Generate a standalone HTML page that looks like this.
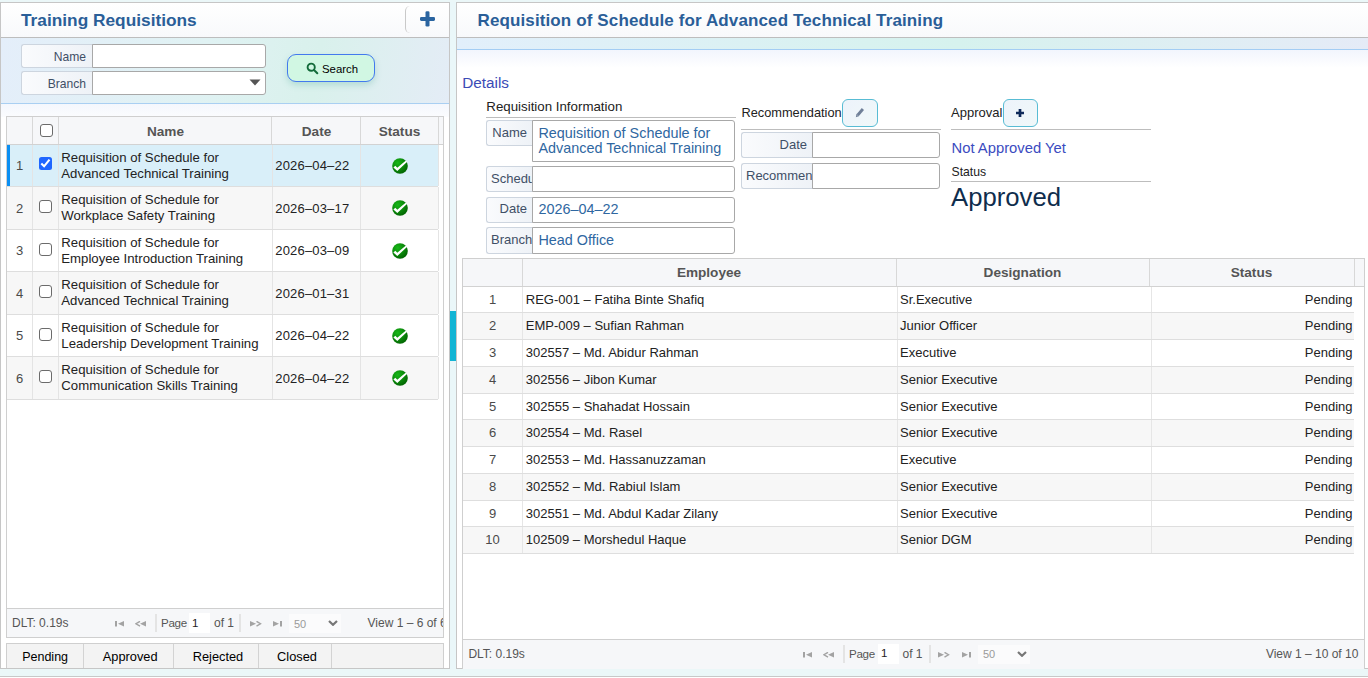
<!DOCTYPE html>
<html><head><meta charset="utf-8"><style>
*{box-sizing:border-box;margin:0;padding:0}
html,body{width:1368px;height:678px;overflow:hidden}
body{background:#ebf7f8;font-family:"Liberation Sans",sans-serif;position:relative;color:#222}
div,span{position:absolute;white-space:nowrap}
.t{line-height:1}
</style></head><body>
<div style="left:0px;top:676px;width:1368px;height:2px;background:#fff;border-top:1px solid #c8c8c8"></div>
<div style="left:0px;top:2px;width:450px;height:667px;background:#fff;border:1px solid #c6c6c6"></div>
<div style="left:1px;top:3px;width:448px;height:34px;background:linear-gradient(#fff,#f8f9fb)"></div>
<div style="left:1px;top:37px;width:448px;height:1px;background:#bdbdbd"></div>
<div class="t" style="left:21px;top:12.36px;font-size:17.3px;color:#2a5e98;font-weight:bold;letter-spacing:0px;">Training Requisitions</div>
<div style="left:405px;top:6px;width:20px;height:27px;border-left:1px solid #c9c9c9;border-radius:5px 0 0 5px"></div>
<svg style="position:absolute;left:420px;top:11px" width="15" height="16" viewBox="0 0 15 16"><rect x="5.5" y="0.3" width="4" height="15.2" rx="1.3" fill="#2a64a0"/><rect x="0" y="5.9" width="15" height="4" rx="1.3" fill="#2a64a0"/></svg>
<div style="left:1px;top:38px;width:448px;height:65px;background:linear-gradient(100deg,#e4eefa 0%,#e0f2f3 45%,#d9f1ec 70%,#e4ecf6 100%)"></div>
<div style="left:1px;top:103px;width:448px;height:1px;background:#a9cff2"></div>
<div style="left:1px;top:104px;width:448px;height:13px;background:linear-gradient(#f4f7fd,#fbfcfe)"></div>
<div style="left:21px;top:44px;width:72px;height:24px;background:linear-gradient(90deg,#fafbfd,#eef2f7);border:1px solid #cdd5df;border-right:none;border-radius:3px 0 0 3px;overflow:hidden"></div>
<div class="t" style="left:-214.00px;width:300px;text-align:right;top:50.96px;font-size:12.1px;color:#3f4f66;font-weight:normal;letter-spacing:0px">Name</div>
<div style="left:92px;top:44px;width:174px;height:24px;background:#fff;border:1px solid #a8a8a8;border-radius:0 3px 3px 0"></div>
<div style="left:21px;top:71px;width:72px;height:24px;background:linear-gradient(90deg,#fafbfd,#eef2f7);border:1px solid #cdd5df;border-right:none;border-radius:3px 0 0 3px;overflow:hidden"></div>
<div class="t" style="left:-214.00px;width:300px;text-align:right;top:77.96px;font-size:12.1px;color:#3f4f66;font-weight:normal;letter-spacing:0px">Branch</div>
<div style="left:92px;top:71px;width:174px;height:24px;background:#fff;border:1px solid #a8a8a8;border-radius:0 3px 3px 0"></div>
<svg style="position:absolute;left:249px;top:79px" width="12" height="7" viewBox="0 0 12 7"><path d="M0.5 0.5h11l-5.5 6z" fill="#555"/></svg>
<div style="left:287px;top:54px;width:88px;height:28px;background:#d1f7e3;border:1.3px solid #4379ee;border-radius:9px;box-shadow:0 3px 6px rgba(60,160,140,.25)"></div>
<svg style="position:absolute;left:306px;top:62px" width="13" height="13" viewBox="0 0 13 13"><circle cx="5.2" cy="5.2" r="3.6" fill="none" stroke="#136b3a" stroke-width="1.9"/><path d="M8 8l3.3 3.3" stroke="#136b3a" stroke-width="2" stroke-linecap="round"/></svg>
<div class="t" style="left:322px;top:64.15px;font-size:11.4px;color:#000;font-weight:normal;letter-spacing:0px;">Search</div>
<div style="left:6px;top:116px;width:438px;height:522px;background:#fff;border:1px solid #cfcfcf"></div>
<div style="left:7px;top:117px;width:436px;height:27px;background:#f6f7f9"></div>
<div style="left:7px;top:144px;width:436px;height:1px;background:#d2d2d2"></div>
<div style="left:32px;top:117px;width:1px;height:27px;background:#d8d8d8"></div>
<div style="left:58px;top:117px;width:1px;height:27px;background:#d8d8d8"></div>
<div style="left:271px;top:117px;width:1px;height:27px;background:#d8d8d8"></div>
<div style="left:360px;top:117px;width:1px;height:27px;background:#d8d8d8"></div>
<div style="left:438px;top:117px;width:1px;height:27px;background:#d8d8d8"></div>
<div class="t" style="left:-80.50px;width:200px;text-align:center;top:125.30px;font-size:13px;color:#222;font-weight:normal;letter-spacing:0px"></div>
<div style="left:40px;top:124px;width:13px;height:13px;border:1.3px solid #6b6b6b;border-radius:3px;background:#fff"></div>
<div class="t" style="left:65.50px;width:200px;text-align:center;top:124.79px;font-size:13.6px;color:#555;font-weight:bold;letter-spacing:0px">Name</div>
<div class="t" style="left:216.50px;width:200px;text-align:center;top:124.79px;font-size:13.6px;color:#555;font-weight:bold;letter-spacing:0px">Date</div>
<div class="t" style="left:299.50px;width:200px;text-align:center;top:124.79px;font-size:13.6px;color:#555;font-weight:bold;letter-spacing:0px">Status</div>
<div style="left:7px;top:145px;width:431px;height:41px;background:#d9eff9"></div>
<div style="left:7px;top:186px;width:431px;height:1px;background:#dedede"></div>
<div style="left:32px;top:145px;width:1px;height:41px;background:#e4e4e4"></div>
<div style="left:58px;top:145px;width:1px;height:41px;background:#e4e4e4"></div>
<div style="left:272px;top:145px;width:1px;height:41px;background:#e4e4e4"></div>
<div style="left:360px;top:145px;width:1px;height:41px;background:#e4e4e4"></div>
<div style="left:438px;top:145px;width:1px;height:41px;background:#e4e4e4"></div>
<div style="left:7px;top:145px;width:3px;height:41px;background:#0b8ff2"></div>
<div class="t" style="left:-80.50px;width:200px;text-align:center;top:159.10px;font-size:13px;color:#4a4a4a;font-weight:normal;letter-spacing:0px">1</div>
<div style="left:39px;top:157.0px;width:13px;height:13px;border-radius:2.5px;background:#1f66ff"></div>
<svg style="position:absolute;left:39px;top:157.0px" width="13" height="13" viewBox="0 0 13 13"><path d="M2.3 6.6L5.1 9.3 10.5 2.7" fill="none" stroke="#fff" stroke-width="2.1"/></svg>
<div class="t" style="left:61.3px;top:150.83px;font-size:13.2px;color:#222;font-weight:normal;letter-spacing:0px;">Requisition of Schedule for</div>
<div class="t" style="left:61.3px;top:166.93px;font-size:13.2px;color:#222;font-weight:normal;letter-spacing:0px;">Advanced Technical Training</div>
<div class="t" style="left:275.3px;top:159.10px;font-size:13px;color:#222;font-weight:normal;letter-spacing:0.17px;">2026–04–22</div>
<svg style="position:absolute;left:392px;top:157.5px" width="16" height="16" viewBox="0 0 16 16" style="overflow:visible"><defs><radialGradient id="g0" cx="0.35" cy="0.3" r="0.8"><stop offset="0" stop-color="#18b818"/><stop offset="1" stop-color="#005e00"/></radialGradient></defs><circle cx="8" cy="8" r="7.8" fill="url(#g0)"/><path d="M1.4 9.6L3.3 7.7 5.3 9.7 13.9 2.4 15.2 3.8 5.3 12.9z" fill="#fff"/></svg>
<div style="left:7px;top:187px;width:431px;height:42px;background:#f7f7f7"></div>
<div style="left:7px;top:229px;width:431px;height:1px;background:#dedede"></div>
<div style="left:32px;top:187px;width:1px;height:42px;background:#e4e4e4"></div>
<div style="left:58px;top:187px;width:1px;height:42px;background:#e4e4e4"></div>
<div style="left:272px;top:187px;width:1px;height:42px;background:#e4e4e4"></div>
<div style="left:360px;top:187px;width:1px;height:42px;background:#e4e4e4"></div>
<div style="left:438px;top:187px;width:1px;height:42px;background:#e4e4e4"></div>
<div class="t" style="left:-80.50px;width:200px;text-align:center;top:201.60px;font-size:13px;color:#4a4a4a;font-weight:normal;letter-spacing:0px">2</div>
<div style="left:39px;top:200.0px;width:13px;height:13px;border:1.3px solid #6b6b6b;border-radius:3px;background:#fff"></div>
<div class="t" style="left:61.3px;top:193.33px;font-size:13.2px;color:#222;font-weight:normal;letter-spacing:0px;">Requisition of Schedule for</div>
<div class="t" style="left:61.3px;top:209.43px;font-size:13.2px;color:#222;font-weight:normal;letter-spacing:0px;">Workplace Safety Training</div>
<div class="t" style="left:275.3px;top:201.60px;font-size:13px;color:#222;font-weight:normal;letter-spacing:0.17px;">2026–03–17</div>
<svg style="position:absolute;left:392px;top:200.0px" width="16" height="16" viewBox="0 0 16 16" style="overflow:visible"><defs><radialGradient id="g1" cx="0.35" cy="0.3" r="0.8"><stop offset="0" stop-color="#18b818"/><stop offset="1" stop-color="#005e00"/></radialGradient></defs><circle cx="8" cy="8" r="7.8" fill="url(#g1)"/><path d="M1.4 9.6L3.3 7.7 5.3 9.7 13.9 2.4 15.2 3.8 5.3 12.9z" fill="#fff"/></svg>
<div style="left:7px;top:230px;width:431px;height:41px;background:#fff"></div>
<div style="left:7px;top:271px;width:431px;height:1px;background:#dedede"></div>
<div style="left:32px;top:230px;width:1px;height:41px;background:#e4e4e4"></div>
<div style="left:58px;top:230px;width:1px;height:41px;background:#e4e4e4"></div>
<div style="left:272px;top:230px;width:1px;height:41px;background:#e4e4e4"></div>
<div style="left:360px;top:230px;width:1px;height:41px;background:#e4e4e4"></div>
<div style="left:438px;top:230px;width:1px;height:41px;background:#e4e4e4"></div>
<div class="t" style="left:-80.50px;width:200px;text-align:center;top:244.10px;font-size:13px;color:#4a4a4a;font-weight:normal;letter-spacing:0px">3</div>
<div style="left:39px;top:242.5px;width:13px;height:13px;border:1.3px solid #6b6b6b;border-radius:3px;background:#fff"></div>
<div class="t" style="left:61.3px;top:235.83px;font-size:13.2px;color:#222;font-weight:normal;letter-spacing:0px;">Requisition of Schedule for</div>
<div class="t" style="left:61.3px;top:251.93px;font-size:13.2px;color:#222;font-weight:normal;letter-spacing:0px;">Employee Introduction Training</div>
<div class="t" style="left:275.3px;top:244.10px;font-size:13px;color:#222;font-weight:normal;letter-spacing:0.17px;">2026–03–09</div>
<svg style="position:absolute;left:392px;top:242.5px" width="16" height="16" viewBox="0 0 16 16" style="overflow:visible"><defs><radialGradient id="g2" cx="0.35" cy="0.3" r="0.8"><stop offset="0" stop-color="#18b818"/><stop offset="1" stop-color="#005e00"/></radialGradient></defs><circle cx="8" cy="8" r="7.8" fill="url(#g2)"/><path d="M1.4 9.6L3.3 7.7 5.3 9.7 13.9 2.4 15.2 3.8 5.3 12.9z" fill="#fff"/></svg>
<div style="left:7px;top:272px;width:431px;height:42px;background:#f7f7f7"></div>
<div style="left:7px;top:314px;width:431px;height:1px;background:#dedede"></div>
<div style="left:32px;top:272px;width:1px;height:42px;background:#e4e4e4"></div>
<div style="left:58px;top:272px;width:1px;height:42px;background:#e4e4e4"></div>
<div style="left:272px;top:272px;width:1px;height:42px;background:#e4e4e4"></div>
<div style="left:360px;top:272px;width:1px;height:42px;background:#e4e4e4"></div>
<div style="left:438px;top:272px;width:1px;height:42px;background:#e4e4e4"></div>
<div class="t" style="left:-80.50px;width:200px;text-align:center;top:286.60px;font-size:13px;color:#4a4a4a;font-weight:normal;letter-spacing:0px">4</div>
<div style="left:39px;top:285.0px;width:13px;height:13px;border:1.3px solid #6b6b6b;border-radius:3px;background:#fff"></div>
<div class="t" style="left:61.3px;top:278.33px;font-size:13.2px;color:#222;font-weight:normal;letter-spacing:0px;">Requisition of Schedule for</div>
<div class="t" style="left:61.3px;top:294.43px;font-size:13.2px;color:#222;font-weight:normal;letter-spacing:0px;">Advanced Technical Training</div>
<div class="t" style="left:275.3px;top:286.60px;font-size:13px;color:#222;font-weight:normal;letter-spacing:0.17px;">2026–01–31</div>
<div style="left:7px;top:315px;width:431px;height:41px;background:#fff"></div>
<div style="left:7px;top:356px;width:431px;height:1px;background:#dedede"></div>
<div style="left:32px;top:315px;width:1px;height:41px;background:#e4e4e4"></div>
<div style="left:58px;top:315px;width:1px;height:41px;background:#e4e4e4"></div>
<div style="left:272px;top:315px;width:1px;height:41px;background:#e4e4e4"></div>
<div style="left:360px;top:315px;width:1px;height:41px;background:#e4e4e4"></div>
<div style="left:438px;top:315px;width:1px;height:41px;background:#e4e4e4"></div>
<div class="t" style="left:-80.50px;width:200px;text-align:center;top:329.10px;font-size:13px;color:#4a4a4a;font-weight:normal;letter-spacing:0px">5</div>
<div style="left:39px;top:327.5px;width:13px;height:13px;border:1.3px solid #6b6b6b;border-radius:3px;background:#fff"></div>
<div class="t" style="left:61.3px;top:320.83px;font-size:13.2px;color:#222;font-weight:normal;letter-spacing:0px;">Requisition of Schedule for</div>
<div class="t" style="left:61.3px;top:336.93px;font-size:13.2px;color:#222;font-weight:normal;letter-spacing:0px;">Leadership Development Training</div>
<div class="t" style="left:275.3px;top:329.10px;font-size:13px;color:#222;font-weight:normal;letter-spacing:0.17px;">2026–04–22</div>
<svg style="position:absolute;left:392px;top:327.5px" width="16" height="16" viewBox="0 0 16 16" style="overflow:visible"><defs><radialGradient id="g4" cx="0.35" cy="0.3" r="0.8"><stop offset="0" stop-color="#18b818"/><stop offset="1" stop-color="#005e00"/></radialGradient></defs><circle cx="8" cy="8" r="7.8" fill="url(#g4)"/><path d="M1.4 9.6L3.3 7.7 5.3 9.7 13.9 2.4 15.2 3.8 5.3 12.9z" fill="#fff"/></svg>
<div style="left:7px;top:357px;width:431px;height:42px;background:#f7f7f7"></div>
<div style="left:7px;top:399px;width:431px;height:1px;background:#dedede"></div>
<div style="left:32px;top:357px;width:1px;height:42px;background:#e4e4e4"></div>
<div style="left:58px;top:357px;width:1px;height:42px;background:#e4e4e4"></div>
<div style="left:272px;top:357px;width:1px;height:42px;background:#e4e4e4"></div>
<div style="left:360px;top:357px;width:1px;height:42px;background:#e4e4e4"></div>
<div style="left:438px;top:357px;width:1px;height:42px;background:#e4e4e4"></div>
<div class="t" style="left:-80.50px;width:200px;text-align:center;top:371.60px;font-size:13px;color:#4a4a4a;font-weight:normal;letter-spacing:0px">6</div>
<div style="left:39px;top:370.0px;width:13px;height:13px;border:1.3px solid #6b6b6b;border-radius:3px;background:#fff"></div>
<div class="t" style="left:61.3px;top:363.33px;font-size:13.2px;color:#222;font-weight:normal;letter-spacing:0px;">Requisition of Schedule for</div>
<div class="t" style="left:61.3px;top:379.43px;font-size:13.2px;color:#222;font-weight:normal;letter-spacing:0px;">Communication Skills Training</div>
<div class="t" style="left:275.3px;top:371.60px;font-size:13px;color:#222;font-weight:normal;letter-spacing:0.17px;">2026–04–22</div>
<svg style="position:absolute;left:392px;top:370.0px" width="16" height="16" viewBox="0 0 16 16" style="overflow:visible"><defs><radialGradient id="g5" cx="0.35" cy="0.3" r="0.8"><stop offset="0" stop-color="#18b818"/><stop offset="1" stop-color="#005e00"/></radialGradient></defs><circle cx="8" cy="8" r="7.8" fill="url(#g5)"/><path d="M1.4 9.6L3.3 7.7 5.3 9.7 13.9 2.4 15.2 3.8 5.3 12.9z" fill="#fff"/></svg>
<div style="left:7px;top:608px;width:436px;height:29px;background:#f6f7f9;border-top:1px solid #cfcfcf"></div>
<div class="t" style="left:12px;top:617.14px;font-size:12px;color:#555;font-weight:normal;letter-spacing:0px;">DLT: 0.19s</div>
<svg style="position:absolute;left:115px;top:621.0px" width="10" height="6" viewBox="0 0 10 6"><rect x="0" y="0" width="2" height="5.5" fill="#a3a3a3"/><path d="M3 2.75L9 0v5.5z" fill="#a3a3a3"/></svg>
<svg style="position:absolute;left:135px;top:621.0px" width="12" height="6" viewBox="0 0 12 6"><path d="M5 0.3L1 2.75 5 5.2" fill="none" stroke="#a3a3a3" stroke-width="1.4"/><path d="M5 2.75L11 0v5.5z" fill="#a3a3a3"/></svg>
<div style="left:155px;top:614px;width:2px;height:18px;background:#e4e4e4"></div>
<div class="t" style="left:161px;top:617.48px;font-size:11.6px;color:#555;font-weight:normal;letter-spacing:-0.3px;">Page</div>
<div style="left:189px;top:613px;width:21px;height:20px;background:#fff"></div>
<div class="t" style="left:192px;top:617.57px;font-size:11.5px;color:#222;font-weight:normal;letter-spacing:0px;">1</div>
<div class="t" style="left:214px;top:617.14px;font-size:12px;color:#555;font-weight:normal;letter-spacing:0px;">of 1</div>
<div style="left:239px;top:614px;width:2px;height:18px;background:#e4e4e4"></div>
<svg style="position:absolute;left:250px;top:621.0px" width="12" height="6" viewBox="0 0 12 6"><path d="M0 0v5.5L6 2.75z" fill="#a3a3a3"/><path d="M6.5 0.3l4 2.45-4 2.45" fill="none" stroke="#a3a3a3" stroke-width="1.4"/></svg>
<svg style="position:absolute;left:273px;top:621.0px" width="10" height="6" viewBox="0 0 10 6"><path d="M0 0v5.5L6 2.75z" fill="#a3a3a3"/><rect x="7" y="0" width="2" height="5.5" fill="#a3a3a3"/></svg>
<div style="left:289px;top:614px;width:52px;height:19px;background:#fbfbfc"></div>
<div class="t" style="left:294px;top:618.59px;font-size:11px;color:#9a9a9a;font-weight:normal;letter-spacing:0px;">50</div>
<svg style="position:absolute;left:328px;top:620.0px" width="10" height="6" viewBox="0 0 10 6"><path d="M1 1l4 3.8 4-3.8" fill="none" stroke="#777" stroke-width="2.2"/></svg>
<div style="left:7px;top:609px;width:436px;height:28px;overflow:hidden"><div class="t" style="left:360.5px;top:8.14px;font-size:12px;color:#555">View 1 – 6 of 6</div></div>
<div style="left:6px;top:643px;width:438px;height:25px;background:#f3f3f3;border:1px solid #cfcfcf;border-bottom:none"></div>
<div style="left:83px;top:644px;width:1px;height:24px;background:#d3d3d3"></div>
<div style="left:173px;top:644px;width:1px;height:24px;background:#d3d3d3"></div>
<div style="left:258px;top:644px;width:1px;height:24px;background:#d3d3d3"></div>
<div style="left:331px;top:644px;width:1px;height:24px;background:#d3d3d3"></div>
<div class="t" style="left:-54.90px;width:200px;text-align:center;top:651.42px;font-size:12.5px;color:#000;font-weight:normal;letter-spacing:0px">Pending</div>
<div class="t" style="left:30.20px;width:200px;text-align:center;top:651.16px;font-size:12.8px;color:#000;font-weight:normal;letter-spacing:0px">Approved</div>
<div class="t" style="left:118.00px;width:200px;text-align:center;top:651.16px;font-size:12.8px;color:#000;font-weight:normal;letter-spacing:0px">Rejected</div>
<div class="t" style="left:197.00px;width:200px;text-align:center;top:651.16px;font-size:12.8px;color:#000;font-weight:normal;letter-spacing:0px">Closed</div>
<div style="left:450px;top:2px;width:6px;height:667px;background:#eaf7f9"></div>
<div style="left:450px;top:311px;width:6px;height:50px;background:#12b4d4"></div>
<div style="left:456px;top:2px;width:920px;height:667px;background:#fff;border:1px solid #c6c6c6"></div>
<div style="left:457px;top:3px;width:911px;height:34px;background:linear-gradient(#fff,#f8f9fb)"></div>
<div style="left:457px;top:37px;width:911px;height:1px;background:#bdbdbd"></div>
<div class="t" style="left:477.5px;top:11.61px;font-size:17px;color:#2a5e98;font-weight:bold;letter-spacing:0.12px;">Requisition of Schedule for Advanced Technical Training</div>
<div style="left:457px;top:38px;width:911px;height:11px;background:linear-gradient(90deg,#e2effb 0%,#d8f2f0 45%,#d6f2ee 55%,#e5ebf7 100%)"></div>
<div style="left:457px;top:49px;width:911px;height:1px;background:#a3cdf4"></div>
<div style="left:457px;top:50px;width:911px;height:18px;background:linear-gradient(#f2f5fd,#fff)"></div>
<div class="t" style="left:462.2px;top:74.75px;font-size:15.3px;color:#3b4bb6;font-weight:normal;letter-spacing:0px;">Details</div>
<div class="t" style="left:486.3px;top:99.74px;font-size:13.3px;color:#222;font-weight:normal;letter-spacing:0px;">Requisition Information</div>
<div style="left:486px;top:117px;width:250px;height:1px;background:#bdbdbd"></div>
<div style="left:486px;top:120px;width:47px;height:26px;background:linear-gradient(90deg,#fafbfd,#eef2f7);border:1px solid #cdd5df;border-right:none;border-radius:3px 0 0 3px;overflow:hidden"></div>
<div class="t" style="left:227.00px;width:300px;text-align:right;top:125.80px;font-size:13px;color:#3f4f66;font-weight:normal;letter-spacing:0px">Name</div>
<div style="left:532px;top:120px;width:203px;height:42px;background:#fff;border:1px solid #a8a8a8;border-radius:0 3px 3px 0"></div>
<div class="t" style="left:538.4px;top:126.11px;font-size:14.4px;color:#2f67a1;font-weight:normal;letter-spacing:0px;">Requisition of Schedule for</div>
<div class="t" style="left:538.4px;top:140.81px;font-size:14.4px;color:#2f67a1;font-weight:normal;letter-spacing:0px;">Advanced Technical Training</div>
<div style="left:486px;top:166px;width:47px;height:26px;background:linear-gradient(90deg,#fafbfd,#eef2f7);border:1px solid #cdd5df;border-right:none;border-radius:3px 0 0 3px;overflow:hidden"></div>
<div style="left:486px;top:166px;width:47px;height:26px;overflow:hidden"><div class="t" style="left:5px;top:5.70px;font-size:13px;color:#3f4f66">Schedule</div></div>
<div style="left:532px;top:166px;width:203px;height:26px;background:#fff;border:1px solid #a8a8a8;border-radius:0 3px 3px 0"></div>
<div style="left:486px;top:197px;width:47px;height:26px;background:linear-gradient(90deg,#fafbfd,#eef2f7);border:1px solid #cdd5df;border-right:none;border-radius:3px 0 0 3px;overflow:hidden"></div>
<div class="t" style="left:227.00px;width:300px;text-align:right;top:202.00px;font-size:13px;color:#3f4f66;font-weight:normal;letter-spacing:0px">Date</div>
<div style="left:532px;top:197px;width:203px;height:26px;background:#fff;border:1px solid #a8a8a8;border-radius:0 3px 3px 0"></div>
<div class="t" style="left:538.4px;top:202.11px;font-size:14.4px;color:#2f67a1;font-weight:normal;letter-spacing:0px;">2026–04–22</div>
<div style="left:486px;top:227px;width:47px;height:27px;background:linear-gradient(90deg,#fafbfd,#eef2f7);border:1px solid #cdd5df;border-right:none;border-radius:3px 0 0 3px;overflow:hidden"></div>
<div style="left:486px;top:227px;width:47px;height:27px;overflow:hidden"><div class="t" style="left:5px;top:5.50px;font-size:13px;color:#3f4f66">Branch</div></div>
<div style="left:532px;top:227px;width:203px;height:27px;background:#fff;border:1px solid #a8a8a8;border-radius:0 3px 3px 0"></div>
<div class="t" style="left:538.4px;top:232.51px;font-size:14.4px;color:#2f67a1;font-weight:normal;letter-spacing:0px;">Head Office</div>
<div class="t" style="left:741.4px;top:107.06px;font-size:12.8px;color:#222;font-weight:normal;letter-spacing:0px;">Recommendation</div>
<div style="left:842px;top:99px;width:36px;height:28px;background:linear-gradient(135deg,#edf3fb,#f0f8f9);border:1px solid #58bcd4;border-radius:6px"></div>
<svg style="position:absolute;left:855px;top:107px" width="10" height="11" viewBox="0 0 10 11"><path d="M0.8 10.2l0.7-2.9 5.3-6.2 2.2 1.9-5.3 6.2z" fill="#6f7f98"/><path d="M1.5 7.3l2.2 1.9" stroke="#a9b4c4" stroke-width="0.7"/></svg>
<div style="left:741px;top:129px;width:200px;height:1px;background:#bdbdbd"></div>
<div style="left:741px;top:132px;width:72px;height:26px;background:linear-gradient(90deg,#fafbfd,#eef2f7);border:1px solid #cdd5df;border-right:none;border-radius:3px 0 0 3px;overflow:hidden"></div>
<div class="t" style="left:507.00px;width:300px;text-align:right;top:137.80px;font-size:13px;color:#3f4f66;font-weight:normal;letter-spacing:0px">Date</div>
<div style="left:812px;top:132px;width:128px;height:26px;background:#fff;border:1px solid #a8a8a8;border-radius:0 3px 3px 0"></div>
<div style="left:741px;top:163px;width:72px;height:26px;background:linear-gradient(90deg,#fafbfd,#eef2f7);border:1px solid #cdd5df;border-right:none;border-radius:3px 0 0 3px;overflow:hidden"></div>
<div style="left:741px;top:163px;width:72px;height:26px;overflow:hidden"><div class="t" style="left:5px;top:5.80px;font-size:13px;color:#3f4f66">Recommendation</div></div>
<div style="left:812px;top:163px;width:128px;height:26px;background:#fff;border:1px solid #a8a8a8;border-radius:0 3px 3px 0"></div>
<div class="t" style="left:951.1px;top:106.00px;font-size:13px;color:#222;font-weight:normal;letter-spacing:0px;">Approval</div>
<div style="left:1003px;top:99px;width:35px;height:28px;background:linear-gradient(135deg,#edf3fb,#f0f8f9);border:1px solid #58bcd4;border-radius:6px"></div>
<svg style="position:absolute;left:1016px;top:109px" width="8" height="8" viewBox="0 0 8 8"><path d="M4 0v8M0 4h8" stroke="#0f2a5a" stroke-width="2.7"/></svg>
<div style="left:951px;top:129px;width:200px;height:1px;background:#bdbdbd"></div>
<div class="t" style="left:951.5px;top:140.97px;font-size:14.8px;color:#3b4bc0;font-weight:normal;letter-spacing:0px;">Not Approved Yet</div>
<div class="t" style="left:951.5px;top:165.57px;font-size:12.2px;color:#222;font-weight:normal;letter-spacing:0px;">Status</div>
<div style="left:951px;top:181px;width:200px;height:1px;background:#bdbdbd"></div>
<div class="t" style="left:951px;top:185.24px;font-size:25.7px;color:#0f2d4d;font-weight:normal;letter-spacing:0px;">Approved</div>
<div style="left:462px;top:258px;width:903px;height:411px;background:#fff;border:1px solid #cfcfcf;border-bottom:none"></div>
<div style="left:463px;top:259px;width:901px;height:27px;background:#f6f7f9"></div>
<div style="left:463px;top:286px;width:901px;height:1px;background:#d2d2d2"></div>
<div style="left:522px;top:259px;width:1px;height:27px;background:#d8d8d8"></div>
<div style="left:896px;top:259px;width:1px;height:27px;background:#d8d8d8"></div>
<div style="left:1149px;top:259px;width:1px;height:27px;background:#d8d8d8"></div>
<div style="left:1354px;top:259px;width:1px;height:27px;background:#d8d8d8"></div>
<div class="t" style="left:609.00px;width:200px;text-align:center;top:265.69px;font-size:13.6px;color:#555;font-weight:bold;letter-spacing:0px">Employee</div>
<div class="t" style="left:922.50px;width:200px;text-align:center;top:265.69px;font-size:13.6px;color:#555;font-weight:bold;letter-spacing:0px">Designation</div>
<div class="t" style="left:1151.50px;width:200px;text-align:center;top:265.69px;font-size:13.6px;color:#555;font-weight:bold;letter-spacing:0px">Status</div>
<div style="left:463px;top:287px;width:891px;height:25px;background:#fff"></div>
<div style="left:463px;top:312px;width:891px;height:1px;background:#dedede"></div>
<div style="left:522px;top:287px;width:1px;height:25px;background:#e6e6e6"></div>
<div style="left:897px;top:287px;width:1px;height:25px;background:#e6e6e6"></div>
<div style="left:1151px;top:287px;width:1px;height:25px;background:#e6e6e6"></div>
<div class="t" style="left:392.50px;width:200px;text-align:center;top:292.90px;font-size:13px;color:#4a4a4a;font-weight:normal;letter-spacing:0px">1</div>
<div class="t" style="left:525.8px;top:292.90px;font-size:13px;color:#222;font-weight:normal;letter-spacing:0px;">REG-001 – Fatiha Binte Shafiq</div>
<div class="t" style="left:900px;top:292.90px;font-size:13px;color:#222;font-weight:normal;letter-spacing:0px;">Sr.Executive</div>
<div class="t" style="left:1052.50px;width:300px;text-align:right;top:292.90px;font-size:13px;color:#222;font-weight:normal;letter-spacing:0px">Pending</div>
<div style="left:463px;top:313px;width:891px;height:26px;background:#f7f7f7"></div>
<div style="left:463px;top:339px;width:891px;height:1px;background:#dedede"></div>
<div style="left:522px;top:313px;width:1px;height:26px;background:#e6e6e6"></div>
<div style="left:897px;top:313px;width:1px;height:26px;background:#e6e6e6"></div>
<div style="left:1151px;top:313px;width:1px;height:26px;background:#e6e6e6"></div>
<div class="t" style="left:392.50px;width:200px;text-align:center;top:318.90px;font-size:13px;color:#4a4a4a;font-weight:normal;letter-spacing:0px">2</div>
<div class="t" style="left:525.8px;top:318.90px;font-size:13px;color:#222;font-weight:normal;letter-spacing:0px;">EMP-009 – Sufian Rahman</div>
<div class="t" style="left:900px;top:318.90px;font-size:13px;color:#222;font-weight:normal;letter-spacing:0px;">Junior Officer</div>
<div class="t" style="left:1052.50px;width:300px;text-align:right;top:318.90px;font-size:13px;color:#222;font-weight:normal;letter-spacing:0px">Pending</div>
<div style="left:463px;top:340px;width:891px;height:26px;background:#fff"></div>
<div style="left:463px;top:366px;width:891px;height:1px;background:#dedede"></div>
<div style="left:522px;top:340px;width:1px;height:26px;background:#e6e6e6"></div>
<div style="left:897px;top:340px;width:1px;height:26px;background:#e6e6e6"></div>
<div style="left:1151px;top:340px;width:1px;height:26px;background:#e6e6e6"></div>
<div class="t" style="left:392.50px;width:200px;text-align:center;top:345.90px;font-size:13px;color:#4a4a4a;font-weight:normal;letter-spacing:0px">3</div>
<div class="t" style="left:525.8px;top:345.90px;font-size:13px;color:#222;font-weight:normal;letter-spacing:0px;">302557 – Md. Abidur Rahman</div>
<div class="t" style="left:900px;top:345.90px;font-size:13px;color:#222;font-weight:normal;letter-spacing:0px;">Executive</div>
<div class="t" style="left:1052.50px;width:300px;text-align:right;top:345.90px;font-size:13px;color:#222;font-weight:normal;letter-spacing:0px">Pending</div>
<div style="left:463px;top:367px;width:891px;height:26px;background:#f7f7f7"></div>
<div style="left:463px;top:393px;width:891px;height:1px;background:#dedede"></div>
<div style="left:522px;top:367px;width:1px;height:26px;background:#e6e6e6"></div>
<div style="left:897px;top:367px;width:1px;height:26px;background:#e6e6e6"></div>
<div style="left:1151px;top:367px;width:1px;height:26px;background:#e6e6e6"></div>
<div class="t" style="left:392.50px;width:200px;text-align:center;top:372.90px;font-size:13px;color:#4a4a4a;font-weight:normal;letter-spacing:0px">4</div>
<div class="t" style="left:525.8px;top:372.90px;font-size:13px;color:#222;font-weight:normal;letter-spacing:0px;">302556 – Jibon Kumar</div>
<div class="t" style="left:900px;top:372.90px;font-size:13px;color:#222;font-weight:normal;letter-spacing:0px;">Senior Executive</div>
<div class="t" style="left:1052.50px;width:300px;text-align:right;top:372.90px;font-size:13px;color:#222;font-weight:normal;letter-spacing:0px">Pending</div>
<div style="left:463px;top:394px;width:891px;height:25px;background:#fff"></div>
<div style="left:463px;top:419px;width:891px;height:1px;background:#dedede"></div>
<div style="left:522px;top:394px;width:1px;height:25px;background:#e6e6e6"></div>
<div style="left:897px;top:394px;width:1px;height:25px;background:#e6e6e6"></div>
<div style="left:1151px;top:394px;width:1px;height:25px;background:#e6e6e6"></div>
<div class="t" style="left:392.50px;width:200px;text-align:center;top:399.90px;font-size:13px;color:#4a4a4a;font-weight:normal;letter-spacing:0px">5</div>
<div class="t" style="left:525.8px;top:399.90px;font-size:13px;color:#222;font-weight:normal;letter-spacing:0px;">302555 – Shahadat Hossain</div>
<div class="t" style="left:900px;top:399.90px;font-size:13px;color:#222;font-weight:normal;letter-spacing:0px;">Senior Executive</div>
<div class="t" style="left:1052.50px;width:300px;text-align:right;top:399.90px;font-size:13px;color:#222;font-weight:normal;letter-spacing:0px">Pending</div>
<div style="left:463px;top:420px;width:891px;height:26px;background:#f7f7f7"></div>
<div style="left:463px;top:446px;width:891px;height:1px;background:#dedede"></div>
<div style="left:522px;top:420px;width:1px;height:26px;background:#e6e6e6"></div>
<div style="left:897px;top:420px;width:1px;height:26px;background:#e6e6e6"></div>
<div style="left:1151px;top:420px;width:1px;height:26px;background:#e6e6e6"></div>
<div class="t" style="left:392.50px;width:200px;text-align:center;top:425.90px;font-size:13px;color:#4a4a4a;font-weight:normal;letter-spacing:0px">6</div>
<div class="t" style="left:525.8px;top:425.90px;font-size:13px;color:#222;font-weight:normal;letter-spacing:0px;">302554 – Md. Rasel</div>
<div class="t" style="left:900px;top:425.90px;font-size:13px;color:#222;font-weight:normal;letter-spacing:0px;">Senior Executive</div>
<div class="t" style="left:1052.50px;width:300px;text-align:right;top:425.90px;font-size:13px;color:#222;font-weight:normal;letter-spacing:0px">Pending</div>
<div style="left:463px;top:447px;width:891px;height:26px;background:#fff"></div>
<div style="left:463px;top:473px;width:891px;height:1px;background:#dedede"></div>
<div style="left:522px;top:447px;width:1px;height:26px;background:#e6e6e6"></div>
<div style="left:897px;top:447px;width:1px;height:26px;background:#e6e6e6"></div>
<div style="left:1151px;top:447px;width:1px;height:26px;background:#e6e6e6"></div>
<div class="t" style="left:392.50px;width:200px;text-align:center;top:452.90px;font-size:13px;color:#4a4a4a;font-weight:normal;letter-spacing:0px">7</div>
<div class="t" style="left:525.8px;top:452.90px;font-size:13px;color:#222;font-weight:normal;letter-spacing:0px;">302553 – Md. Hassanuzzaman</div>
<div class="t" style="left:900px;top:452.90px;font-size:13px;color:#222;font-weight:normal;letter-spacing:0px;">Executive</div>
<div class="t" style="left:1052.50px;width:300px;text-align:right;top:452.90px;font-size:13px;color:#222;font-weight:normal;letter-spacing:0px">Pending</div>
<div style="left:463px;top:474px;width:891px;height:26px;background:#f7f7f7"></div>
<div style="left:463px;top:500px;width:891px;height:1px;background:#dedede"></div>
<div style="left:522px;top:474px;width:1px;height:26px;background:#e6e6e6"></div>
<div style="left:897px;top:474px;width:1px;height:26px;background:#e6e6e6"></div>
<div style="left:1151px;top:474px;width:1px;height:26px;background:#e6e6e6"></div>
<div class="t" style="left:392.50px;width:200px;text-align:center;top:479.90px;font-size:13px;color:#4a4a4a;font-weight:normal;letter-spacing:0px">8</div>
<div class="t" style="left:525.8px;top:479.90px;font-size:13px;color:#222;font-weight:normal;letter-spacing:0px;">302552 – Md. Rabiul Islam</div>
<div class="t" style="left:900px;top:479.90px;font-size:13px;color:#222;font-weight:normal;letter-spacing:0px;">Senior Executive</div>
<div class="t" style="left:1052.50px;width:300px;text-align:right;top:479.90px;font-size:13px;color:#222;font-weight:normal;letter-spacing:0px">Pending</div>
<div style="left:463px;top:501px;width:891px;height:25px;background:#fff"></div>
<div style="left:463px;top:526px;width:891px;height:1px;background:#dedede"></div>
<div style="left:522px;top:501px;width:1px;height:25px;background:#e6e6e6"></div>
<div style="left:897px;top:501px;width:1px;height:25px;background:#e6e6e6"></div>
<div style="left:1151px;top:501px;width:1px;height:25px;background:#e6e6e6"></div>
<div class="t" style="left:392.50px;width:200px;text-align:center;top:506.90px;font-size:13px;color:#4a4a4a;font-weight:normal;letter-spacing:0px">9</div>
<div class="t" style="left:525.8px;top:506.90px;font-size:13px;color:#222;font-weight:normal;letter-spacing:0px;">302551 – Md. Abdul Kadar Zilany</div>
<div class="t" style="left:900px;top:506.90px;font-size:13px;color:#222;font-weight:normal;letter-spacing:0px;">Senior Executive</div>
<div class="t" style="left:1052.50px;width:300px;text-align:right;top:506.90px;font-size:13px;color:#222;font-weight:normal;letter-spacing:0px">Pending</div>
<div style="left:463px;top:527px;width:891px;height:26px;background:#f7f7f7"></div>
<div style="left:463px;top:553px;width:891px;height:1px;background:#dedede"></div>
<div style="left:522px;top:527px;width:1px;height:26px;background:#e6e6e6"></div>
<div style="left:897px;top:527px;width:1px;height:26px;background:#e6e6e6"></div>
<div style="left:1151px;top:527px;width:1px;height:26px;background:#e6e6e6"></div>
<div class="t" style="left:392.50px;width:200px;text-align:center;top:532.90px;font-size:13px;color:#4a4a4a;font-weight:normal;letter-spacing:0px">10</div>
<div class="t" style="left:525.8px;top:532.90px;font-size:13px;color:#222;font-weight:normal;letter-spacing:0px;">102509 – Morshedul Haque</div>
<div class="t" style="left:900px;top:532.90px;font-size:13px;color:#222;font-weight:normal;letter-spacing:0px;">Senior DGM</div>
<div class="t" style="left:1052.50px;width:300px;text-align:right;top:532.90px;font-size:13px;color:#222;font-weight:normal;letter-spacing:0px">Pending</div>
<div style="left:463px;top:639px;width:901px;height:30px;background:#f6f7f9;border-top:1px solid #cfcfcf"></div>
<div class="t" style="left:468.4px;top:648.04px;font-size:12px;color:#555;font-weight:normal;letter-spacing:0px;">DLT: 0.19s</div>
<svg style="position:absolute;left:803px;top:651.9000000000001px" width="10" height="6" viewBox="0 0 10 6"><rect x="0" y="0" width="2" height="5.5" fill="#a3a3a3"/><path d="M3 2.75L9 0v5.5z" fill="#a3a3a3"/></svg>
<svg style="position:absolute;left:823px;top:651.9000000000001px" width="12" height="6" viewBox="0 0 12 6"><path d="M5 0.3L1 2.75 5 5.2" fill="none" stroke="#a3a3a3" stroke-width="1.4"/><path d="M5 2.75L11 0v5.5z" fill="#a3a3a3"/></svg>
<div style="left:843px;top:645px;width:2px;height:18px;background:#e4e4e4"></div>
<div class="t" style="left:849px;top:648.38px;font-size:11.6px;color:#555;font-weight:normal;letter-spacing:-0.3px;">Page</div>
<div style="left:878px;top:644px;width:21px;height:20px;background:#fff"></div>
<div class="t" style="left:881px;top:648.47px;font-size:11.5px;color:#222;font-weight:normal;letter-spacing:0px;">1</div>
<div class="t" style="left:902.5px;top:648.04px;font-size:12px;color:#555;font-weight:normal;letter-spacing:0px;">of 1</div>
<div style="left:929px;top:645px;width:2px;height:18px;background:#e4e4e4"></div>
<svg style="position:absolute;left:938px;top:651.9000000000001px" width="12" height="6" viewBox="0 0 12 6"><path d="M0 0v5.5L6 2.75z" fill="#a3a3a3"/><path d="M6.5 0.3l4 2.45-4 2.45" fill="none" stroke="#a3a3a3" stroke-width="1.4"/></svg>
<svg style="position:absolute;left:962px;top:651.9000000000001px" width="10" height="6" viewBox="0 0 10 6"><path d="M0 0v5.5L6 2.75z" fill="#a3a3a3"/><rect x="7" y="0" width="2" height="5.5" fill="#a3a3a3"/></svg>
<div style="left:978px;top:645px;width:52px;height:19px;background:#fbfbfc"></div>
<div class="t" style="left:983px;top:649.49px;font-size:11px;color:#9a9a9a;font-weight:normal;letter-spacing:0px;">50</div>
<svg style="position:absolute;left:1017px;top:650.9000000000001px" width="10" height="6" viewBox="0 0 10 6"><path d="M1 1l4 3.8 4-3.8" fill="none" stroke="#777" stroke-width="2.2"/></svg>
<div class="t" style="left:1058.40px;width:300px;text-align:right;top:648.04px;font-size:12px;color:#555;font-weight:normal;letter-spacing:0px">View 1 – 10 of 10</div>
</body></html>
